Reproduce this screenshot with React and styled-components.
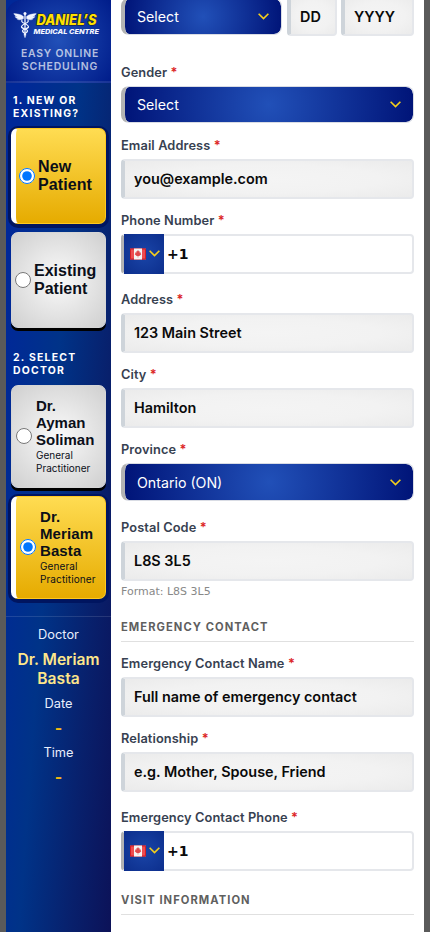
import React from 'react';
import styled, { createGlobalStyle } from 'styled-components';

const GlobalStyle = createGlobalStyle`
    * { box-sizing: border-box; }
    body {
        margin: 0;
        background: #5a5a5a;
        font-family: Inter, sans-serif;
    }
    input, button { font-family: inherit; margin: 0; }
`;

const Page = styled.div`
    display: flex;
    height: 932px;
    padding: 0 6px;
    overflow: hidden;
`;

const Sidebar = styled.aside`
    width: 105px;
    flex: none;
    display: flex;
    flex-direction: column;
    background: linear-gradient(94deg, #002898 0%, #002898 12%, #003388 46%, #08206c 76%, #0c1258 100%);
`;
const SidebarHeader = styled.header`
    height: 83px;
    flex: none;
    padding-top: 11px;
    border-bottom: 2px solid rgba(255, 255, 255, 0.1);
    border-top-left-radius: 16px;
    background: radial-gradient(circle at 50% 50%, #2150b8 0%, #001c8a 100%);
`;
const Tagline = styled.div`
    margin-top: 9px;
    padding-left: 3px;
    text-align: center;
    font-size: 10.4px;
    font-weight: 600;
    line-height: 13px;
    letter-spacing: 0.8px;
    color: rgba(255, 255, 255, 0.7);
`;
const StepTitle = styled.h4`
    margin: ${props => props.$top}px 0 8px 7px;
    font-size: 10.4px;
    font-weight: 700;
    line-height: 13px;
    letter-spacing: 1.25px;
    color: #fff;
`;
const Options = styled.div`
    display: flex;
    flex-direction: column;
    gap: 8px;
    padding: 0 5px;
`;
const Option = styled.label`
    display: flex;
    align-items: center;
    gap: ${props => props.$gap}px;
    height: ${props => props.$height}px;
    padding-left: ${props => props.$pad}px;
    border-radius: 7px;
    border: 1px solid ${props => props.$active ? '#ffc91f' : '#d6d6d6'};
    border-left: ${props => props.$active ? '5px solid #fff' : '1px solid #d6d6d6'};
    background: ${props => props.$active
        ? 'linear-gradient(180deg, #ffdc52 0%, #e6ab00 100%)'
        : 'radial-gradient(circle, #fafafa 0%, #cfcfcf 100%)'};
    box-shadow: ${props => props.$active ? '0 1px 0 3px #001560' : '0 3px 0 #000'};
    font: bold ${props => props.$size}px/${props => props.$line}px "Liberation Sans", sans-serif;
    letter-spacing: ${props => props.$active ? '0.1px' : '0'};
    color: #0b0f19;
    input {
        width: 16px;
        height: 16px;
        flex: none;
    }
    small {
        display: block;
        font: 400 10px/13px Inter, sans-serif;
        letter-spacing: ${props => props.$active ? '0.1px' : '0'};
    }
`;
const DoctorRadio = styled.input`
    && { margin-bottom: 2px; }
`;
const DoctorName = styled.span`
    margin-top: -1px;
    small:first-of-type { padding-top: 1px; }
`;
const Summary = styled.div`
    margin-top: 17px;
    padding-top: 10px;
    border-top: 1px solid rgba(255, 255, 255, 0.12);
    text-align: center;
    font-size: 12.8px;
    line-height: 16px;
    color: #e8eefc;
    strong {
        display: block;
        margin: 7px 0 8px;
        font-size: 15.6px;
        font-weight: 600;
        line-height: 19px;
        color: #fde68a;
    }
`;
const Dash = styled.div`
    margin: 6px 0 7px;
    font-size: 16px;
    font-weight: 700;
    line-height: 20px;
    color: #f3b910;
`;

const Form = styled.main`
    width: 313px;
    padding: 0 10px;
    background: #fff;
`;
const DateRow = styled.div`
    display: grid;
    grid-template-columns: 161px 50px 73px;
    column-gap: 5px;
    height: 40px;
    margin-top: -4px;
    align-items: end;
    > :first-child { margin-bottom: 0.6px; }
    > :last-child { margin-left: -1px; width: 73px; }
`;
const Field = styled.div`
    margin-top: ${props => props.$top}px;
`;
const Label = styled.div`
    height: 16px;
    margin-bottom: 6px;
    font-size: 12.8px;
    font-weight: 600;
    line-height: 18px;
    letter-spacing: 0.1px;
    color: #374151;
    span { color: #dc2626; }
`;
const TextInput = styled.input`
    display: block;
    width: 100%;
    height: 40px;
    padding: 0 9px;
    border: 2px solid #e5e7eb;
    border-left: 4px solid #ced4da;
    border-radius: 4px;
    outline: none;
    background: radial-gradient(ellipse, #f4f4f4 0%, #f2f2f2 55%, #ebebeb 100%);
    font-size: 14.4px;
    font-weight: 600;
    color: #0a0a0a;
    &::placeholder { color: #0a0a0a; opacity: 1; }
`;
const SelectButton = styled.button`
    display: flex;
    align-items: center;
    justify-content: space-between;
    width: 100%;
    height: 37.6px;
    padding: 0 11px 0 12px;
    border: 1px solid #d9dce4;
    border-left: 4px solid #b3b3b3;
    border-radius: 8px;
    background: radial-gradient(circle, #2150b8 0%, #001478 100%);
    background-clip: padding-box;
    font-size: 14.2px;
    color: #fff;
`;
const PhoneBox = styled.div`
    display: flex;
    height: 40px;
    border: 2px solid #e5e7eb;
    border-left: 3px solid #b3b3b3;
    border-radius: 4px;
    font: bold 14px/36px "DejaVu Sans", sans-serif;
    color: #0a0a0a;
`;
const Country = styled.div`
    display: flex;
    align-items: center;
    gap: 2px;
    width: 40px;
    height: 40px;
    margin: -2px 3px 0 0;
    padding-left: 6px;
    background: radial-gradient(circle, #1a45a8 0%, #0c2e8c 100%);
`;
const Hint = styled.div`
    margin-top: 4px;
    font: 11px/14px "DejaVu Sans", sans-serif;
    color: #888;
`;
const SectionTitle = styled.h3`
    margin: ${props => props.$top}px 0 0;
    padding-bottom: 7px;
    border-bottom: 1px solid #e0e0e0;
    font-size: 11.2px;
    font-weight: 700;
    line-height: 14px;
    letter-spacing: 1.05px;
    color: #5f5f5f;
`;

const LogoSvg = styled.svg`
    display: block;
`;

function Logo() {
    return (
        <LogoSvg width="105" height="27" viewBox="6 11 105 27">
            <g fill="none" stroke="#f1f5ff" strokeLinecap="round">
                <path d="M25 14v23" strokeWidth="1.3" />
                <path d="M23.5 16.5C21 14 17 14 13.8 13.6c.8 2 2.2 2.7 4 3-1.3.2-2 .1-2.8-.1.8 1.7 2.3 2 3.9 1.9-.8.4-1.4.4-2 .4 1.6 1.6 4 1.2 6.6-.2z" fill="#f1f5ff" strokeWidth=".4" />
                <path d="M26.5 16.5c2.5-2.5 6.5-2.5 9.7-2.9-.8 2-2.2 2.7-4 3 1.3.2 2 .1 2.8-.1-.8 1.7-2.3 2-3.9 1.9.8.4 1.4.4 2 .4-1.6 1.6-4 1.2-6.6-.2z" fill="#f1f5ff" strokeWidth=".4" />
                <path d="M22 20c-2 3 6 4 6.5 6.5S22 29 22.5 31s3.5 2 3.2 4" strokeWidth="1.2" />
                <path d="M28 20c2 3-6 4-6.5 6.5S28 29 27.5 31s-3.5 2-3.2 4" strokeWidth="1.2" />
            </g>
            <circle cx="25" cy="13.5" r="1.5" fill="#f1f5ff" />
            <text x="36.5" y="25" textLength="60" lengthAdjust="spacingAndGlyphs" fontFamily="Inter" fontSize="14" fontWeight="800" fontStyle="italic" fill="#ffe000" stroke="#1c1c28" strokeWidth="1.2" paintOrder="stroke">DANIEL’S</text>
            <text x="33.5" y="34" textLength="65.5" lengthAdjust="spacingAndGlyphs" fontFamily="Inter" fontSize="6.6" fontWeight="800" fontStyle="italic" fill="#f4f6ff">MEDICAL CENTRE</text>
        </LogoSvg>
    );
}

function Chevron() {
    return (
        <svg width="13" height="13" viewBox="0 0 12 12" fill="none" stroke="#f5cf1b" strokeWidth="1.5">
            <path d="M1.5 3.5 6 8l4.5-4.5" />
        </svg>
    );
}

function Flag() {
    return (
        <svg width="16" height="12" viewBox="0 0 16 12">
            <path d="M0 .5h16v11H0z" fill="#ed4c50" />
            <path d="M.5 1h15v10H.5z" fill="none" stroke="#d51e26" />
            <path d="M4 .5h8v11H4z" fill="#f4f4f4" />
            <path d="m8 2 1 1.5.8-.3-.2 1.6L11 4.5l-.3 1.2.6.6-2 1.7H8.3v1.5h-.6V8H6.7l-2-1.7.6-.6L5 4.5l1.4.3-.2-1.6.8.3z" fill="#e0484c" />
        </svg>
    );
}

function Select({ value }) {
    return <SelectButton type="button"><span>{value}</span><Chevron /></SelectButton>;
}

function Phone() {
    return (
        <PhoneBox>
            <Country><Flag /><Chevron /></Country>
            +1
        </PhoneBox>
    );
}

function FormField({ label, top = 13, placeholder, children }) {
    return (
        <Field $top={top}>
            <Label>{label} <span>*</span></Label>
            {children || <TextInput placeholder={placeholder} />}
        </Field>
    );
}

function App() {
    return (
        <>
            <GlobalStyle />
            <Page>
                <Sidebar>
                    <SidebarHeader>
                        <Logo />
                        <Tagline>EASY ONLINE<br />SCHEDULING</Tagline>
                    </SidebarHeader>
                    <StepTitle $top={11}>1. NEW OR EXISTING?</StepTitle>
                    <Options>
                        <Option $active $height={96} $pad={3} $gap={3} $size={16} $line={18}>
                            <input type="radio" name="patient" defaultChecked />
                            <span>New<br />Patient</span>
                        </Option>
                        <Option $height={96} $pad={3} $gap={3} $size={16} $line={18}>
                            <input type="radio" name="patient" />
                            <span>Existing<br />Patient</span>
                        </Option>
                    </Options>
                    <StepTitle $top={23}>2. SELECT DOCTOR</StepTitle>
                    <Options>
                        <Option $height={103} $pad={4} $gap={4} $size={15} $line={17}>
                            <DoctorRadio type="radio" name="doctor" />
                            <DoctorName>Dr.<br />Ayman<br />Soliman<small>General<br />Practitioner</small></DoctorName>
                        </Option>
                        <Option $active $height={103} $pad={4} $gap={4} $size={15} $line={17}>
                            <DoctorRadio type="radio" name="doctor" defaultChecked />
                            <DoctorName>Dr.<br />Meriam<br />Basta<small>General<br />Practitioner</small></DoctorName>
                        </Option>
                    </Options>
                    <Summary>
                        Doctor
                        <strong>Dr. Meriam<br />Basta</strong>
                        Date
                        <Dash>-</Dash>
                        Time
                        <Dash>-</Dash>
                    </Summary>
                </Sidebar>
                <Form>
                    <DateRow>
                        <Select value="Select" />
                        <TextInput placeholder="DD" />
                        <TextInput placeholder="YYYY" />
                    </DateRow>
                    <FormField label="Gender" top={27.6}><Select value="Select" /></FormField>
                    <FormField label="Email Address" top={13.8} placeholder="you@example.com" />
                    <FormField label="Phone Number"><Phone /></FormField>
                    <FormField label="Address" top={17} placeholder="123 Main Street" />
                    <FormField label="City" placeholder="Hamilton" />
                    <FormField label="Province" top={13.4}><Select value="Ontario (ON)" /></FormField>
                    <FormField label="Postal Code" top={18} placeholder="L8S 3L5" />
                    <Hint>Format: L8S 3L5</Hint>
                    <SectionTitle $top={21}>EMERGENCY CONTACT</SectionTitle>
                    <FormField label="Emergency Contact Name" placeholder="Full name of emergency contact" />
                    <FormField label="Relationship" placeholder="e.g. Mother, Spouse, Friend" />
                    <FormField label="Emergency Contact Phone" top={17}><Phone /></FormField>
                    <SectionTitle $top={22}>VISIT INFORMATION</SectionTitle>
                </Form>
            </Page>
        </>
    );
}

export default App;
